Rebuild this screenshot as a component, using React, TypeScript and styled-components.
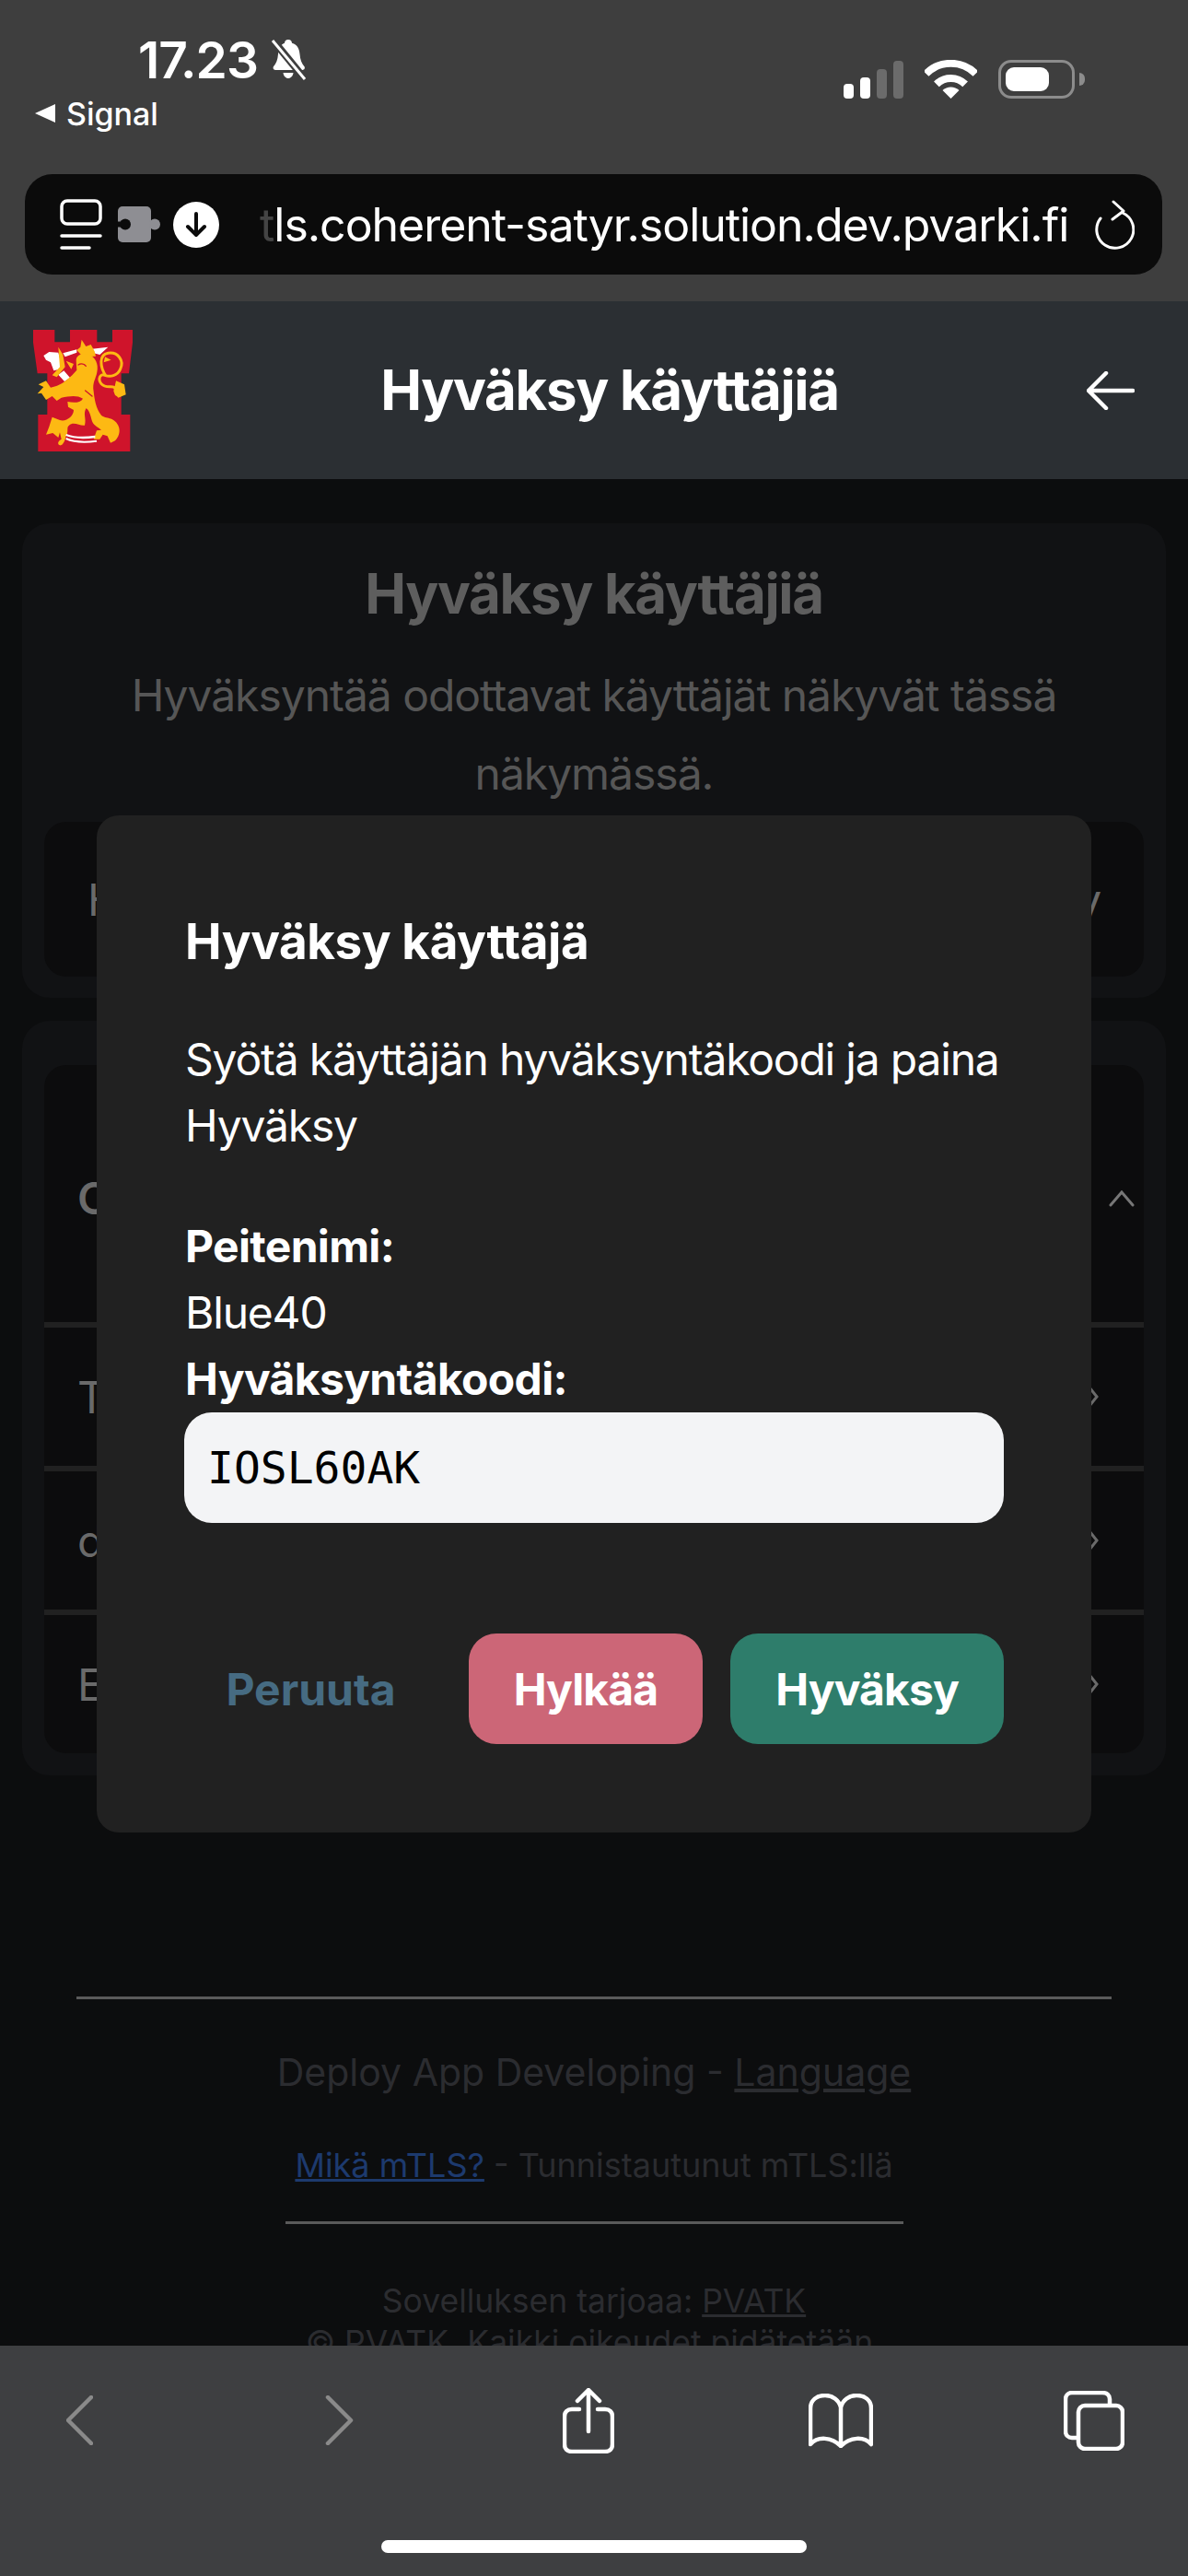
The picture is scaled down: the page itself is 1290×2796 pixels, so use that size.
import styled, { createGlobalStyle } from "styled-components";

const GlobalStyle = createGlobalStyle`
  html, body {
    margin: 0;
    padding: 0;
    background: #0c0d0e;
    font-family: Inter, "Liberation Sans", sans-serif;
  }
  * {
    box-sizing: border-box;
  }
`;

const Screen = styled.div`
  width: 1290px;
  height: 2796px;
  display: flex;
  flex-direction: column;
  overflow: hidden;
`;

const TopChrome = styled.div`
  flex: none;
  height: 327px;
  background: #3e3e3e;
  color: #fff;
`;

const StatusBar = styled.div`
  height: 189px;
  display: flex;
  justify-content: space-between;
  padding: 0 123px 0 38px;
`;

const StatusLeft = styled.div`
  display: flex;
  flex-direction: column;
`;

const TimeRow = styled.div`
  display: flex;
  align-items: center;
  gap: 13px;
  height: 60px;
  margin: 35px 0 0 112px;
`;

const Time = styled.span`
  font-size: 55px;
  font-weight: 600;
  letter-spacing: -1px;
`;

const BackToApp = styled.div`
  display: flex;
  align-items: center;
  gap: 12px;
  height: 40px;
  margin-top: 8px;
`;

const BackTriangle = styled.span`
  width: 0;
  height: 0;
  border-top: 10px solid transparent;
  border-bottom: 10px solid transparent;
  border-right: 22px solid #fff;
`;

const BackLabel = styled.span`
  font-size: 34px;
  font-weight: 500;
`;

const StatusRight = styled.div`
  display: flex;
  align-items: flex-end;
  height: 42px;
  margin-top: 65px;
`;

const SignalBars = styled.div`
  display: flex;
  align-items: flex-end;
  gap: 7px;
  margin-right: 23px;
`;

const SignalBar = styled.span<{ $h: number; $on: boolean }>`
  width: 11px;
  height: ${(p) => p.$h}px;
  border-radius: 4px;
  background: ${(p) => (p.$on ? "#fff" : "#6b6b6b")};
`;

const Battery = styled.div`
  position: relative;
  width: 83px;
  height: 42px;
  margin-left: 23px;
  padding: 5px;
  border: 3px solid #8c8c8c;
  border-radius: 14px;
  &::after {
    content: "";
    position: absolute;
    right: -14px;
    top: 11px;
    width: 6px;
    height: 14px;
    border-radius: 0 6px 6px 0;
    background: #8c8c8c;
  }
`;

const BatteryFill = styled.div`
  width: 47px;
  height: 100%;
  border-radius: 9px;
  background: #fff;
`;

const UrlBar = styled.div`
  height: 109px;
  margin: 0 28px 0 27px;
  padding: 0 30px 0 38px;
  display: flex;
  align-items: center;
  background: #0b0b0b;
  border-radius: 30px;
`;

const UrlIcons = styled.div`
  display: flex;
  align-items: center;
  margin-right: 44px;
`;

const PuzzleIcon = styled.svg`
  margin: 0 14px 0 17px;
`;

const UrlText = styled.div`
  flex: 1;
  font-size: 50px;
  letter-spacing: -1.04px;
  color: #fff;
  white-space: nowrap;
`;

const FadedLetter = styled.span`
  color: #444;
`;

const PageHeader = styled.header`
  flex: none;
  height: 193px;
  display: flex;
  justify-content: space-between;
  align-items: center;
  padding: 0 58px 0 36px;
  background: #2b2f33;
  color: #fff;
`;

const HeaderTitle = styled.h1`
  margin: 0 0 2px;
  font-size: 60px;
  letter-spacing: -1.36px;
  font-weight: 700;
`;

const Main = styled.main`
  position: relative;
  flex: 1;
  min-height: 0;
  overflow: hidden;
  padding: 48px 24px 0;
  background: #0c0d0e;
`;

const Card = styled.section`
  background: #111214;
  border-radius: 30px;
  padding: 24px;
`;

const IntroCard = styled(Card)`
  height: 515px;
  text-align: center;
`;

const CardTitle = styled.h2`
  margin: 21px 0 0;
  font-size: 60px;
  letter-spacing: -1.36px;
  line-height: 62px;
  font-weight: 700;
  color: #5e5e5e;
`;

const CardText = styled.p`
  margin: 37px 0 10px;
  padding: 0 40px;
  font-size: 48px;
  letter-spacing: -1.03px;
  line-height: 85px;
  color: #565656;
`;

const InnerCard = styled.div`
  background: #0c0c0d;
  border-radius: 24px;
  overflow: hidden;
`;

const EmptyRow = styled(InnerCard)`
  height: 168px;
  display: flex;
  align-items: center;
  justify-content: center;
  font-size: 48px;
  letter-spacing: -1.2px;
  color: #6a6a6a;
  white-space: nowrap;
`;

const ListCard = styled(Card)`
  margin-top: 25px;
  padding-top: 48px;
`;

const ListHeader = styled.div`
  height: 279px;
  display: flex;
  align-items: center;
  justify-content: space-between;
  padding: 10px 10px 0 36px;
  font-size: 48px;
  font-weight: 600;
  color: #6a6a6a;
`;

const ListRow = styled.div`
  height: 156px;
  display: flex;
  align-items: center;
  justify-content: space-between;
  padding: 0 48px 0 36px;
  border-top: 6px solid #212121;
  font-size: 48px;
  color: #6a6a6a;
`;

const Footer = styled.footer`
  margin: 240px 35px 0;
  display: flex;
  flex-direction: column;
  align-items: center;
  text-align: center;
`;

const Rule = styled.hr<{ $w: number }>`
  width: ${(p) => p.$w}px;
  height: 3px;
  margin: 0;
  border: 0;
  background: #5a5a5a;
`;

const FooterLead = styled.div`
  margin-top: 49px;
  font-size: 41px;
  line-height: 60px;
  color: #2b2c30;
`;

const FooterLine = styled.div`
  margin-top: 43px;
  margin-bottom: 33px;
  font-size: 36px;
  line-height: 56px;
  color: #2b2c30;
`;

const FooterCredits = styled.div`
  margin-top: 61px;
  font-size: 35.500px;
  line-height: 45px;
  color: #2b2c30;
`;

const FooterLink = styled.a<{ $blue?: boolean }>`
  color: ${(p) => (p.$blue ? "#1d3a6e" : "inherit")};
  text-decoration: underline;
`;

const Modal = styled.div`
  position: absolute;
  top: 365px;
  left: 105px;
  width: 1080px;
  padding: 101px 95px 96px 96px;
  background: #212121;
  border-radius: 24px;
  color: #fff;
  font-size: 48px;
  letter-spacing: -1.2px;
  line-height: 72px;
`;

const ModalTitle = styled.h3`
  margin: 0 0 56px;
  font-size: 53px;
  letter-spacing: -0.45px;
  line-height: 72px;
  font-weight: 700;
`;

const ModalText = styled.p`
  margin: 0 0 59px;
`;

const FieldLabel = styled.div`
  font-weight: 700;
  letter-spacing: -0.67px;
`;

const CodeInput = styled.div`
  height: 120px;
  margin-left: -1px;
  padding-left: 25px;
  display: flex;
  align-items: center;
  background: #f3f4f6;
  border-radius: 30px;
  color: #000;
  font-family: "DejaVu Sans Mono", monospace;
  letter-spacing: 0;
`;

const ModalActions = styled.div`
  margin-top: 120px;
  display: flex;
  justify-content: flex-end;
  gap: 30px;
`;

const ActionButton = styled.button<{ $bg: string; $color: string; $tight?: boolean }>`
  height: 120px;
  padding: 0 49px;
  border: 0;
  border-radius: 30px;
  background: ${(p) => p.$bg};
  color: ${(p) => p.$color};
  font-family: inherit;
  font-size: 48px;
  font-weight: 700;
  letter-spacing: ${(p) => (p.$tight ? "-0.9px" : "0")};
`;

const BottomBar = styled.div`
  flex: none;
  height: 250px;
  padding-top: 45px;
  background: #3e3f41;
`;

const ToolRow = styled.div`
  height: 72px;
  display: grid;
  grid-template-columns: 172px 392px 150px 398px 152px;
  align-items: center;
  justify-items: center;
`;

const HomeIndicator = styled.div`
  width: 462px;
  height: 14px;
  margin: 94px auto 0;
  border-radius: 7px;
  background: #fff;
`;

function BellSlash() {
  return (
    <svg width="41" height="44" viewBox="0 0 41 44">
      <path
        fill="#fff"
        d="M20 0c2.500 0 4 1.700 4 3.800 6 1.500 8 6.500 8.500 12 .5 6 2 10 5 13.500 1 1.500 0 3.700-2 3.700H6c-2 0-3-2.200-2-3.700 3-3.500 4.500-7.500 5-13.500.5-5.500 2.500-10.500 7-12C16 1.700 17.500 0 20 0zM14.500 36h11c-.4 3.500-2.800 6-5.500 6s-5.100-2.500-5.500-6z"
      />
      <path d="M3 0l36 44" stroke="#3e3e3e" strokeWidth="8" />
      <path d="M3 1l35 42" stroke="#fff" strokeWidth="3" />
    </svg>
  );
}

function Wifi() {
  return (
    <svg width="57" height="42" viewBox="0 0 57 42" fill="none" stroke="#fff" strokeWidth="8">
      <path d="M1.600 15A38 38 0 0 1 55.400 15" />
      <path d="M12.900 26.400A22 22 0 0 1 44.100 26.400" />
      <path d="M28.500 42L19.500 33A13 13 0 0 1 37.500 33Z" fill="#fff" stroke="none" />
    </svg>
  );
}

function ReaderIcon() {
  return (
    <svg width="46" height="56" viewBox="0 0 46 56" fill="none" stroke="#fff" strokeWidth="3.500" strokeLinecap="round">
      <rect x="2" y="2" width="42" height="25" rx="6" />
      <path d="M2 40H44" />
      <path d="M2 53H32" />
    </svg>
  );
}

function Lion() {
  return (
    <svg width="108" height="132" viewBox="108 84 324 396">
      <path
        fill="#cf142b"
        d="M108 84H178V124H228V84H316V124H366V84H432V125L420 226H395V360H424V480H124V360H154V226H122L108 125Z"
      />
      <path fill="#fff" d="M205 160L250 148V158L212 172ZM300 146L352 140L325 165L305 160Z" />
      <path fill="#fff" d="M142 168L160 156L190 158L204 210L175 217L165 190L150 182ZM190 230L208 217L228 240L210 252Z" />
      <path fill="#fdb913" d="M190 140L205 165L212 205L185 238L170 232L195 205ZM215 185L240 195L232 212Z" />
      <path fill="#fdb913" d="M250 150L262 140L266 116L280 138L296 132L308 154L312 170L270 172Z" />
      <path
        fill="#fdb913"
        d="M248 182C250 165 270 158 290 165C310 172 322 195 316 222C312 245 300 255 305 285C308 310 312 340 330 362C345 375 370 365 385 395C395 415 385 435 375 445L360 452L350 430L335 425L325 440L305 440L315 412L330 410C318 400 302 395 298 375C292 350 285 340 280 340C270 360 282 372 276 395C260 398 240 380 225 395C215 402 225 415 215 430C212 445 205 462 195 460C185 455 190 445 200 440L195 418L190 435L172 420L150 425L160 400L170 368L195 378C215 385 240 365 240 345L222 335L220 318C240 322 262 322 270 308C250 295 225 300 200 305L185 315L170 300L150 312L135 290L122 292L142 270L125 262L150 250L165 272C195 268 215 250 235 232L250 215Z"
      />
      <path
        fill="none"
        stroke="#fdb913"
        strokeWidth="9"
        d="M345 234C325 205 322 165 352 160C385 155 405 185 392 212C382 235 358 238 342 232C325 225 318 245 330 260C345 278 372 262 375 275C378 288 372 298 392 298"
      />
      <path fill="#fdb913" d="M362 182L338 190L342 172ZM378 250L405 262L410 295L385 305L370 285Z" />
      <path fill="none" stroke="#fff" strokeWidth="7" d="M215 426C245 438 280 436 310 432" />
      <path fill="none" stroke="#fff" strokeWidth="6" d="M215 438C245 452 285 450 315 446" />
      <path fill="none" stroke="#cf142b" strokeWidth="4" strokeLinecap="round" d="M255 198C265 192 275 196 280 202M278 282L300 300" />
    </svg>
  );
}

function ChevronRight() {
  return (
    <svg width="14" height="24" viewBox="0 0 14 24" fill="none" stroke="#6a6a6a" strokeWidth="3" strokeLinecap="round">
      <path d="M3 2L11 12L3 22" />
    </svg>
  );
}

export default function App() {
  return (
    <Screen>
      <GlobalStyle />
      <TopChrome>
        <StatusBar>
          <StatusLeft>
            <TimeRow>
              <Time>17.23</Time>
              <BellSlash />
            </TimeRow>
            <BackToApp>
              <BackTriangle />
              <BackLabel>Signal</BackLabel>
            </BackToApp>
          </StatusLeft>
          <StatusRight>
            <SignalBars>
              <SignalBar $h={16} $on />
              <SignalBar $h={23} $on />
              <SignalBar $h={32} $on={false} />
              <SignalBar $h={41} $on={false} />
            </SignalBars>
            <Wifi />
            <Battery>
              <BatteryFill />
            </Battery>
          </StatusRight>
        </StatusBar>
        <UrlBar>
          <UrlIcons>
            <ReaderIcon />
            <PuzzleIcon width="46" height="39" viewBox="0 0 46 39">
              <rect width="36" height="39" rx="5" fill="#8e8e93" />
              <circle cx="40" cy="19.500" r="6" fill="#8e8e93" />
              <circle cx="8" cy="19.500" r="6" fill="#0b0b0b" />
              <rect y="16.500" width="6" height="6" fill="#0b0b0b" />
            </PuzzleIcon>
            <svg width="50" height="50" viewBox="0 0 50 50">
              <circle cx="25" cy="25" r="25" fill="#fff" />
              <path d="M25 13V36M16 27L25 36L34 27" fill="none" stroke="#0b0b0b" strokeWidth="4" strokeLinecap="round" strokeLinejoin="round" />
            </svg>
          </UrlIcons>
          <UrlText>
            <FadedLetter>t</FadedLetter>ls.coherent-satyr.solution.dev.pvarki.fi
          </UrlText>
          <svg width="43" height="54" viewBox="0 0 43 54" fill="none" stroke="#fff" strokeWidth="3" strokeLinecap="round" strokeLinejoin="round">
            <path d="M30 14A20 20 0 1 1 6 20" />
            <path d="M20 2L31 12L19 21" />
          </svg>
        </UrlBar>
      </TopChrome>

      <PageHeader>
        <Lion />
        <HeaderTitle>Hyväksy käyttäjiä</HeaderTitle>
        <svg width="52" height="42" viewBox="0 0 52 42" fill="none" stroke="#fff" strokeWidth="4.500" strokeLinecap="round" strokeLinejoin="round">
          <path d="M50 21H3M21 2L2 21L21 40" />
        </svg>
      </PageHeader>

      <Main>
        <IntroCard>
          <CardTitle>Hyväksy käyttäjiä</CardTitle>
          <CardText>Hyväksyntää odottavat käyttäjät näkyvät tässä näkymässä.</CardText>
          <EmptyRow>Hyväksyntää odottavat käyttäjät: ei yhtään hyväksy</EmptyRow>
        </IntroCard>

        <ListCard>
          <InnerCard>
            <ListHeader>
              <span>Callsign</span>
              <svg width="28" height="18" viewBox="0 0 28 18" fill="none" stroke="#777" strokeWidth="3" strokeLinecap="round">
                <path d="M2 16L14 2L26 16" />
              </svg>
            </ListHeader>
            <ListRow>
              <span>Tango10</span>
              <ChevronRight />
            </ListRow>
            <ListRow>
              <span>delta22</span>
              <ChevronRight />
            </ListRow>
            <ListRow>
              <span>Echo31</span>
              <ChevronRight />
            </ListRow>
          </InnerCard>
        </ListCard>

        <Footer>
          <Rule $w={1124} />
          <FooterLead>
            Deploy App Developing - <FooterLink>Language</FooterLink>
          </FooterLead>
          <FooterLine>
            <FooterLink $blue>Mikä mTLS?</FooterLink> - Tunnistautunut mTLS:llä
          </FooterLine>
          <Rule $w={671} />
          <FooterCredits>
            Sovelluksen tarjoaa: <FooterLink>PVATK</FooterLink>
            <br />© PVATK. Kaikki oikeudet pidätetään.
          </FooterCredits>
        </Footer>

        <Modal>
          <ModalTitle>Hyväksy käyttäjä</ModalTitle>
          <ModalText>Syötä käyttäjän hyväksyntäkoodi ja paina Hyväksy</ModalText>
          <FieldLabel>Peitenimi:</FieldLabel>
          <div>Blue40</div>
          <FieldLabel>Hyväksyntäkoodi:</FieldLabel>
          <CodeInput>IOSL60AK</CodeInput>
          <ModalActions>
            <ActionButton $bg="transparent" $color="#466b82">Peruuta</ActionButton>
            <ActionButton $bg="#cc6677" $color="#fff" $tight>Hylkää</ActionButton>
            <ActionButton $bg="#2e7d6b" $color="#fff" $tight>Hyväksy</ActionButton>
          </ModalActions>
        </Modal>
      </Main>

      <BottomBar>
        <ToolRow>
          <svg width="29" height="54" viewBox="0 0 29 54" fill="none" stroke="#8a8a8a" strokeWidth="4.500" strokeLinecap="round" strokeLinejoin="round">
            <path d="M27 2L2 27L27 52" />
          </svg>
          <svg width="31" height="54" viewBox="0 0 31 54" fill="none" stroke="#8a8a8a" strokeWidth="4.500" strokeLinecap="round" strokeLinejoin="round">
            <path d="M3 2L28 27L3 52" />
          </svg>
          <svg width="56" height="71" viewBox="0 0 56 71" fill="none" stroke="#fff" strokeWidth="4.500" strokeLinecap="round" strokeLinejoin="round">
            <path d="M18 23H10C5 23 2 26 2 31V61C2 66 5 69 10 69H46C51 69 54 66 54 61V31C54 26 51 23 46 23H38" />
            <path d="M28 47V3M16 14L28 2L40 14" />
          </svg>
          <svg width="70" height="59" viewBox="0 0 70 59" fill="none" stroke="#fff" strokeWidth="4.500" strokeLinecap="round" strokeLinejoin="round">
            <path d="M35 15C33 7 26 2 18 2C9 2 2 7 2 16V55C10 46 25 47 35 57C45 47 60 46 68 55V16C68 7 61 2 52 2C44 2 37 7 35 15V57" />
          </svg>
          <svg width="66" height="65" viewBox="0 0 66 65" fill="none" stroke="#fff" strokeWidth="4.500" strokeLinecap="round" strokeLinejoin="round">
            <path d="M15 51H9C5 51 2 48 2 44V9C2 5 5 2 9 2H42C47 2 50 5 50 9V15" />
            <rect x="16" y="16" width="48" height="47" rx="7" />
          </svg>
        </ToolRow>
        <HomeIndicator />
      </BottomBar>
    </Screen>
  );
}
